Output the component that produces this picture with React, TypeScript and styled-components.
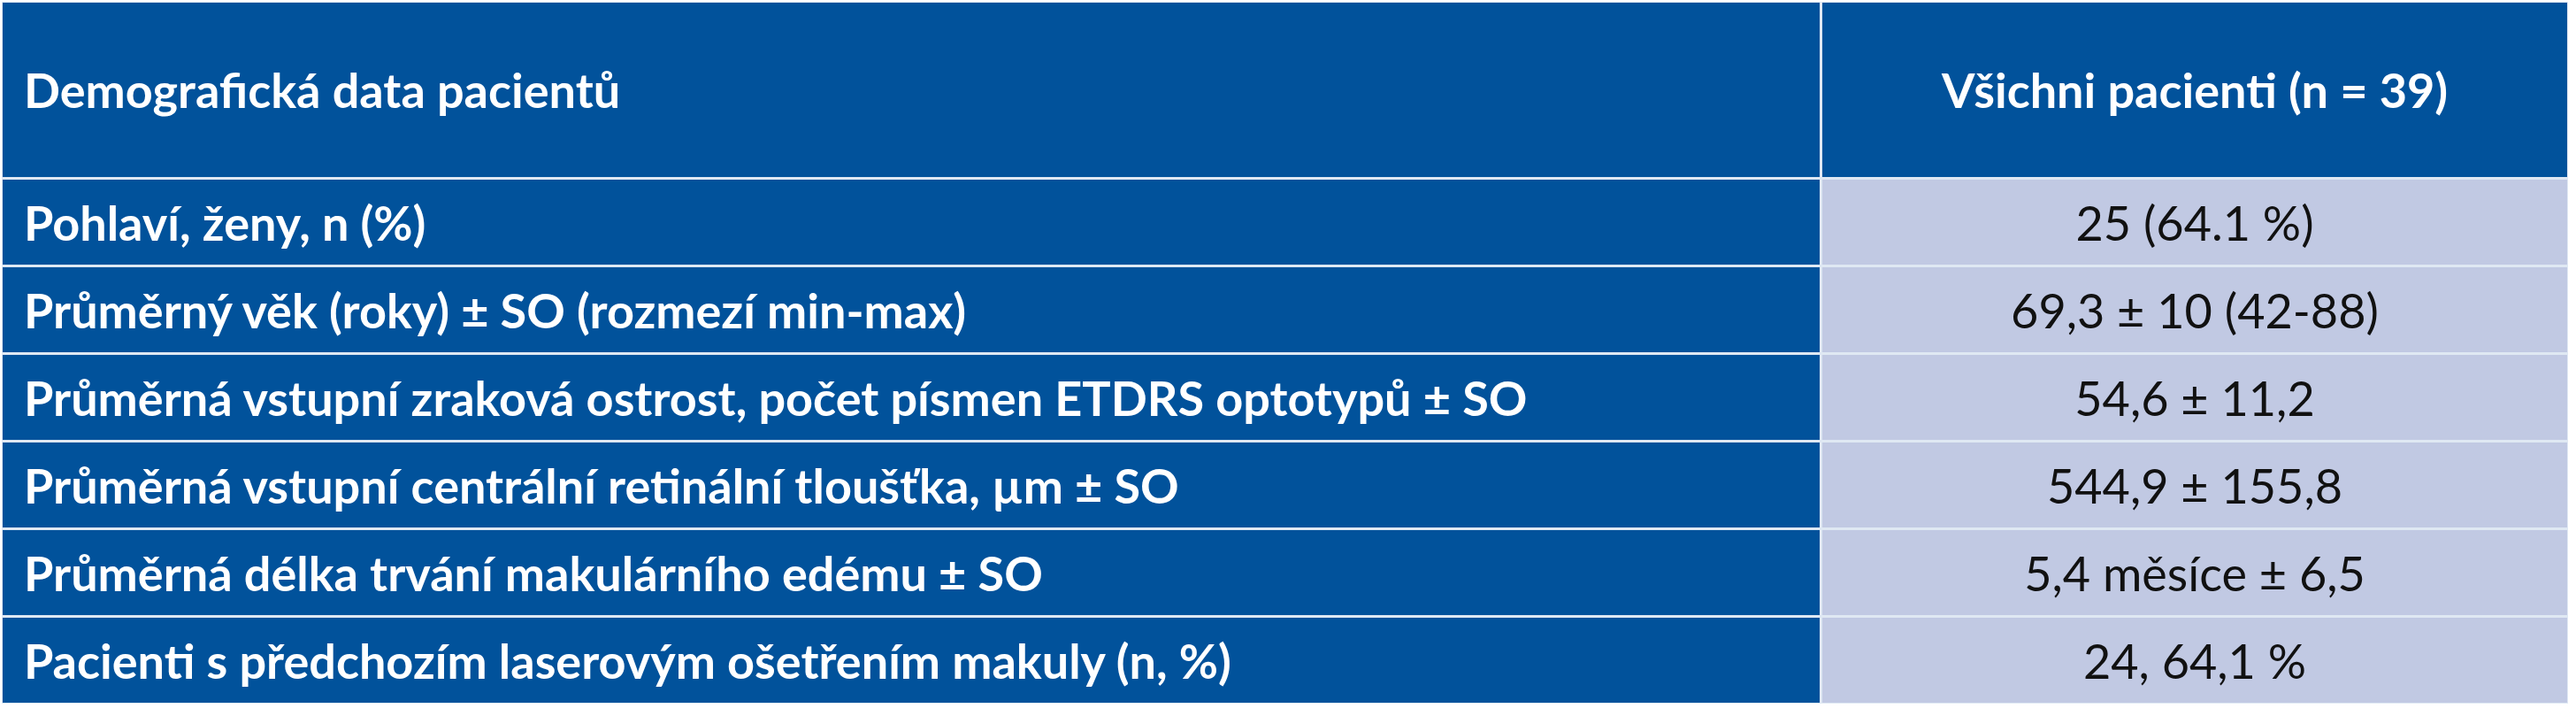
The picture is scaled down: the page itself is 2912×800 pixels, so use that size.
import { Fragment } from "react";
import styled, { createGlobalStyle } from "styled-components";

const GlobalStyle = createGlobalStyle`
  html, body {
    margin: 0;
    padding: 0;
    background: #ffffff;
  }
  body {
    font-family: "Lato", "Noto Sans", sans-serif;
  }
`;

const Page = styled.div`
  padding: 2px 9px 2px 2px;
`;

const Table = styled.div`
  display: grid;
  grid-template-columns: 2054px 1fr;
  grid-template-rows: 197px repeat(6, 96px);
  gap: 3px;
  padding: 1px;
  background: #dfe8f3;
`;

const Cell = styled.div<{ $head?: boolean; $value?: boolean }>`
  display: flex;
  align-items: center;
  justify-content: ${(p) => (p.$value ? "center" : "flex-start")};
  padding-left: ${(p) => (p.$value ? "0" : "24px")};
  background: ${(p) => (p.$value && !p.$head ? "#c1c9e3" : "#01529b")};
  color: ${(p) => (p.$value && !p.$head ? "#111111" : "#ffffff")};
  font-size: 54px;
  font-weight: ${(p) => (p.$value && !p.$head ? 400 : 700)};
  white-space: nowrap;
`;

const rows: [string, string][] = [
  ["Pohlaví, ženy, n (%)", "25 (64.1 %)"],
  ["Průměrný věk (roky) ± SO (rozmezí min-max)", "69,3 ± 10 (42-88)"],
  ["Průměrná vstupní zraková ostrost, počet písmen ETDRS optotypů ± SO", "54,6 ± 11,2"],
  ["Průměrná vstupní centrální retinální tloušťka, µm ± SO", "544,9 ± 155,8"],
  ["Průměrná délka trvání makulárního edému ± SO", "5,4 měsíce ± 6,5"],
  ["Pacienti s předchozím laserovým ošetřením makuly (n, %)", "24, 64,1 %"],
];

export default function App() {
  return (
    <>
      <GlobalStyle />
      <Page>
        <Table>
          <Cell $head>Demografická data pacientů</Cell>
          <Cell $head $value>
            Všichni pacienti (n = 39)
          </Cell>
          {rows.map(([label, value]) => (
            <Fragment key={label}>
              <Cell>{label}</Cell>
              <Cell $value>{value}</Cell>
            </Fragment>
          ))}
        </Table>
      </Page>
    </>
  );
}
